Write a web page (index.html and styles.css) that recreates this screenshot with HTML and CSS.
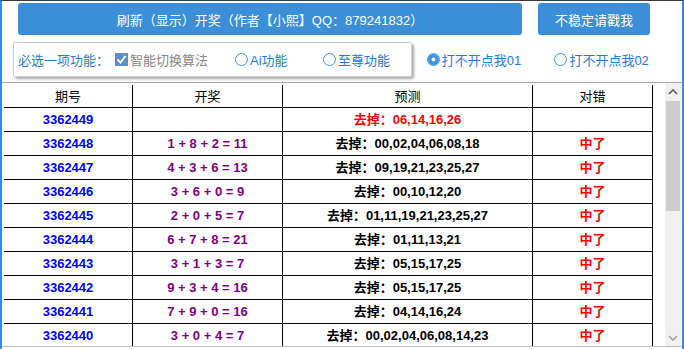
FILE: index.html
```html
<!DOCTYPE html>
<html lang="zh-CN">
<head>
    <meta charset="UTF-8">
    <title>开奖预测</title>
    <link rel="stylesheet" href="styles.css">
</head>
<body>
    <div class="window">
        <!-- 顶部按钮 -->
        <div class="toolbar">
            <button class="btn btn-main">刷新（显示）开奖（作者【小熙】QQ：879241832）</button>
            <button class="btn btn-side">不稳定请戳我</button>
        </div>

        <!-- 功能选项 -->
        <div class="options">
            <div class="groupbox">
                <span class="group-label">必选一项功能：</span>
                <label class="opt opt-check">
                    <span class="checkbox">
                        <svg width="13" height="13" viewBox="0 0 13 13"><polyline points="2.5,6.5 5.5,9.5 10.5,3" fill="none" stroke="#fff" stroke-width="2"/></svg>
                    </span>智能切换算法
                </label>
                <label class="opt opt-ai"><span class="radio"></span>Ai功能</label>
                <label class="opt"><span class="radio"></span>至尊功能</label>
            </div>
            <label class="opt opt-free"><span class="radio checked"></span>打不开点我01</label>
            <label class="opt opt-free"><span class="radio"></span>打不开点我02</label>
        </div>

        <!-- 数据表 -->
        <div class="pane">
            <div class="grid">
                <div class="row head">
                    <div>期号</div><div>开奖</div><div>预测</div><div>对错</div>
                </div>
                <div class="row">
                    <div class="issue">3362449</div><div class="sum"></div><div class="guess next">去掉：06,14,16,26</div><div class="hit"></div>
                </div>
                <div class="row">
                    <div class="issue">3362448</div><div class="sum">1 + 8 + 2 = 11</div><div class="guess">去掉：00,02,04,06,08,18</div><div class="hit">中了</div>
                </div>
                <div class="row">
                    <div class="issue">3362447</div><div class="sum">4 + 3 + 6 = 13</div><div class="guess">去掉：09,19,21,23,25,27</div><div class="hit">中了</div>
                </div>
                <div class="row">
                    <div class="issue">3362446</div><div class="sum">3 + 6 + 0 = 9</div><div class="guess">去掉：00,10,12,20</div><div class="hit">中了</div>
                </div>
                <div class="row">
                    <div class="issue">3362445</div><div class="sum">2 + 0 + 5 = 7</div><div class="guess">去掉：01,11,19,21,23,25,27</div><div class="hit">中了</div>
                </div>
                <div class="row">
                    <div class="issue">3362444</div><div class="sum">6 + 7 + 8 = 21</div><div class="guess">去掉：01,11,13,21</div><div class="hit">中了</div>
                </div>
                <div class="row">
                    <div class="issue">3362443</div><div class="sum">3 + 1 + 3 = 7</div><div class="guess">去掉：05,15,17,25</div><div class="hit">中了</div>
                </div>
                <div class="row">
                    <div class="issue">3362442</div><div class="sum">9 + 3 + 4 = 16</div><div class="guess">去掉：05,15,17,25</div><div class="hit">中了</div>
                </div>
                <div class="row">
                    <div class="issue">3362441</div><div class="sum">7 + 9 + 0 = 16</div><div class="guess">去掉：04,14,16,24</div><div class="hit">中了</div>
                </div>
                <div class="row">
                    <div class="issue">3362440</div><div class="sum">3 + 0 + 4 = 7</div><div class="guess">去掉：00,02,04,06,08,14,23</div><div class="hit">中了</div>
                </div>
            </div>

            <!-- 滚动条 -->
            <div class="scrollbar">
                <div class="arrow">
                    <svg width="16" height="17" viewBox="0 0 16 17"><polyline points="4,11 8,7 12,11" fill="none" stroke="#606060" stroke-width="1.6"/></svg>
                </div>
                <div class="thumb"></div>
                <div class="track"></div>
                <div class="arrow">
                    <svg width="16" height="17" viewBox="0 0 16 17"><polyline points="4,7 8,11 12,7" fill="none" stroke="#a3a3a3" stroke-width="1.6"/></svg>
                </div>
            </div>
        </div>
    </div>
</body>
</html>
```

FILE: styles.css
```css
/* 基础 */
* {
    box-sizing: border-box;
}
body {
    margin: 0;
    background: #fff;
    font-family: "Liberation Sans", "Noto Sans CJK SC", sans-serif;
    font-size: 13px;
}

/* 窗口外框 */
.window {
    width: 684px;
    height: 349px;
    border-top: 1px solid #3a3a3a;
    border-left: 2px solid #2f8ee3;
    border-right: 2px solid #2f8ee3;
    overflow: hidden;
}

/* 顶部按钮 */
.toolbar {
    display: flex;
    gap: 16px;
    padding: 2px 0 0 16px;
}
.btn {
    height: 32px;
    border: none;
    border-radius: 3px;
    background: #3b8fd9;
    color: #fff;
    font-family: inherit;
    font-size: 13px;
    padding: 0;
}
.btn-main {
    width: 504px;
}
.btn-side {
    width: 112px;
}

/* 功能选项 */
.options {
    display: flex;
    align-items: center;
    margin-top: 7px;
    padding-left: 11px;
}
.groupbox {
    display: flex;
    align-items: center;
    width: 400px;
    height: 35px;
    padding-left: 4px;
    border: 1px solid #d0d0d0;
    border-radius: 2px;
    box-shadow: 2px 2px 3px rgba(0,0,0,0.35);
}
.group-label {
    width: 97px;
    color: #1f7bdc;
}
.opt {
    display: flex;
    align-items: center;
    color: #1f7bdc;
}
.opt-check {
    width: 120px;
    color: #888;
}
.opt-ai {
    width: 88px;
}
.opt-free {
    width: 128px;
}
.opt-free:first-of-type {
    margin-left: 15px;
}
.checkbox {
    width: 13px;
    height: 13px;
    margin-right: 2px;
    background: #5a8fca;
    display: flex;
}
.radio {
    width: 13px;
    height: 13px;
    margin-right: 2px;
    border: 1.5px solid #3c91e6;
    border-radius: 50%;
    background: #fff;
}
.radio.checked {
    background: #3c91e6;
    border-color: #3c91e6;
    box-shadow: inset 0 0 0 3.5px #3c91e6, inset 0 0 0 6px #fff;
    background: #fff;
}

/* 数据表 */
.pane {
    display: flex;
    margin-top: 5px;
    height: 265px;
    border-top: 1px solid #a8a8a8;
    border-bottom: 1px solid #c0c0c0;
}
.grid {
    padding: 2px 0 0 2px;
    height: 100%;
    overflow: hidden;
}
.row {
    display: grid;
    grid-template-columns: 129px 150px 250px 120px;
    height: 24px;
    border-bottom: 1px solid #000;
    font-weight: bold;
}
.row div {
    border-right: 1px solid #000;
    display: flex;
    align-items: center;
    justify-content: center;
    line-height: 1;
}
.row.head {
    font-weight: normal;
    color: #000;
    height: 23px;
}
.issue {
    color: #0000ff;
}
.sum {
    color: #800080;
}
.guess {
    color: #000;
}
.guess.next {
    color: #ff0000;
}
.hit {
    color: #ff0000;
}

/* 滚动条 */
.scrollbar {
    display: flex;
    flex-direction: column;
    width: 16px;
    margin: 0 1px 0 auto;
    background: #f0f0f0;
}
.arrow {
    height: 17px;
}
.thumb {
    height: 110px;
    margin: 1px 1px 0;
    background: #cdcdcd;
}
.track {
    flex: 1;
}
```
